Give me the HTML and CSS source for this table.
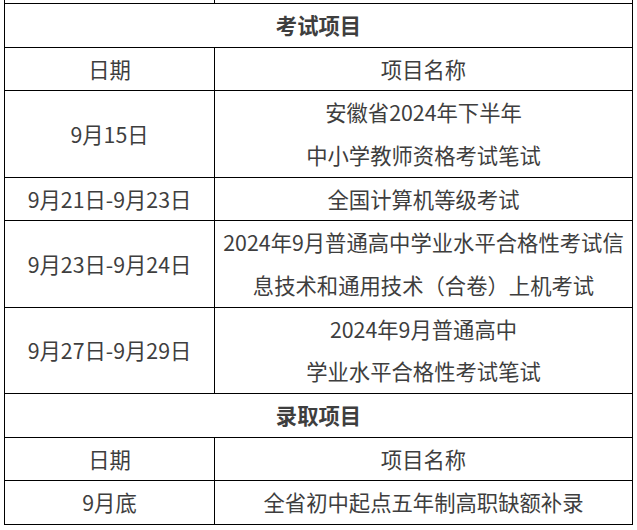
FILE: index.html
```html
<!DOCTYPE html>
<html lang="zh-CN">
<head>
<meta charset="utf-8">
<title>考试与录取项目</title>
<link rel="stylesheet" href="styles.css">
</head>
<body>
<div class="frame">
<table class="schedule">
  <colgroup><col class="c-date"><col class="c-name"></colgroup>
  <tbody>
    <tr class="prev"><td></td><td></td></tr>
    <tr><th colspan="2">考试项目</th></tr>
    <tr><td>日期</td><td>项目名称</td></tr>
    <tr><td>9月15日</td><td>安徽省2024年下半年<br>中小学教师资格考试笔试</td></tr>
    <tr><td>9月21日-9月23日</td><td>全国计算机等级考试</td></tr>
    <tr><td>9月23日-9月24日</td><td>2024年9月普通高中学业水平合格性考试信<br>息技术和通用技术（合卷）上机考试</td></tr>
    <tr><td>9月27日-9月29日</td><td>2024年9月普通高中<br>学业水平合格性考试笔试</td></tr>
    <tr><th colspan="2">录取项目</th></tr>
    <tr><td>日期</td><td>项目名称</td></tr>
    <tr><td>9月底</td><td>全省初中起点五年制高职缺额补录</td></tr>
  </tbody>
</table>
</div>
</body>
</html>
```

FILE: styles.css
```css
html, body {
  margin: 0;
  padding: 0;
  background: #ffffff;
}
.frame {
  padding-left: 4px;
  overflow: hidden;
  height: 530px;
}
.schedule {
  border-collapse: collapse;
  width: 628px;
  table-layout: fixed;
  margin-top: -40.67px;
  font-family: "Noto Sans CJK SC", "Microsoft YaHei", sans-serif;
  font-size: 16pt;
  line-height: 2;
  color: #3e3e3e;
}
.c-date { width: 210px; }
.c-name { width: 418px; }
.schedule td,
.schedule th {
  border: 1px solid #000000;
  padding: 0;
  text-align: center;
  vertical-align: middle;
  white-space: nowrap;
}
.schedule th {
  font-weight: bold;
}
.schedule .prev td {
  height: 42.67px;
}
```
